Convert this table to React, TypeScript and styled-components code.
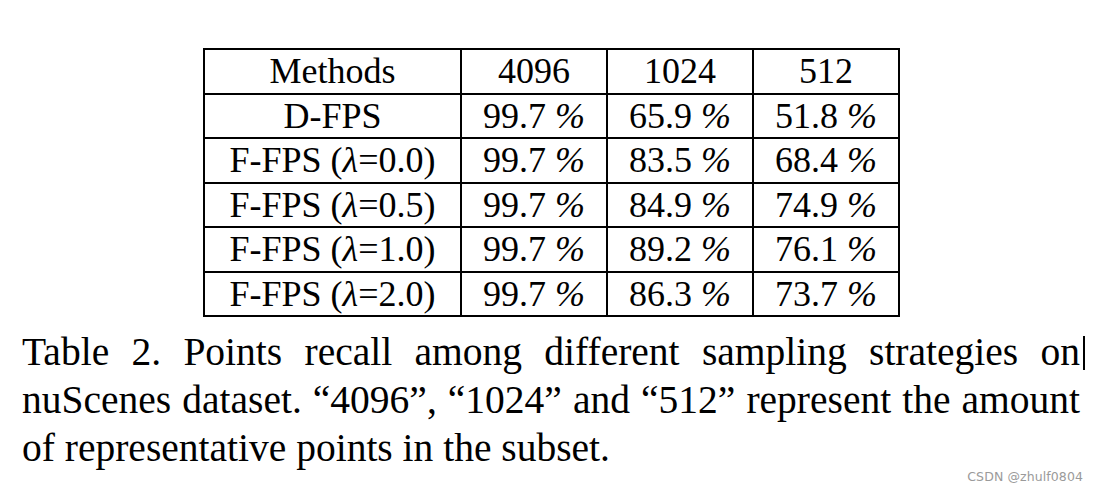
import React from 'react';
import styled, { createGlobalStyle } from 'styled-components';

// Data
interface ResultRow {
  method: string;
  lambda?: string;
  values: string[];
}

const columns = ['4096', '1024', '512'];

const rows: ResultRow[] = [
  { method: 'D-FPS', values: ['99.7', '65.9', '51.8'] },
  { method: 'F-FPS', lambda: '0.0', values: ['99.7', '83.5', '68.4'] },
  { method: 'F-FPS', lambda: '0.5', values: ['99.7', '84.9', '74.9'] },
  { method: 'F-FPS', lambda: '1.0', values: ['99.7', '89.2', '76.1'] },
  { method: 'F-FPS', lambda: '2.0', values: ['99.7', '86.3', '73.7'] },
];

// Styled components
const GlobalStyle = createGlobalStyle`
  html, body {
    margin: 0;
    padding: 0;
    background: #fff;
  }
  body {
    width: 1104px;
    height: 494px;
    overflow: hidden;
    font-family: "Liberation Serif", "Times New Roman", serif;
    color: #000;
  }
`;

const Page = styled.div`
  position: relative;
  width: 1104px;
  height: 494px;
  padding-top: 48px;
  box-sizing: border-box;
`;

const ResultsTable = styled.table`
  border-collapse: collapse;
  margin-left: 203px;
  font-size: 36px;
  line-height: 1;
`;

const Cell = styled.td<{ $wide?: boolean }>`
  border: 2px solid #000;
  width: ${props => (props.$wide ? '255px' : '144px')};
  height: 42.5px;
  padding: 0;
  text-align: center;
  vertical-align: middle;
  white-space: nowrap;
`;

const Pct = styled.span`
  font-style: italic;
`;

const Lambda = styled.span`
  font-style: italic;
`;

const Caption = styled.div`
  margin: 11px 0 0 22px;
  width: 1058px;
  font-size: 39.5px;
  line-height: 48px;
`;

const CaptionLine = styled.div<{ $last?: boolean }>`
  text-align: justify;
  text-align-last: ${props => (props.$last ? 'left' : 'justify')};
  white-space: nowrap;
`;

const Caret = styled.span`
  display: inline-block;
  width: 2px;
  height: 34px;
  margin-left: 3px;
  margin-right: -5px;
  background: #000;
  vertical-align: -5px;
`;

const Watermark = styled.div`
  position: absolute;
  right: 21px;
  bottom: 10px;
  font-family: "DejaVu Sans", "Liberation Sans", sans-serif;
  font-size: 12.5px;
  color: #9a9a9a;
  letter-spacing: 0.1px;
`;

const App: React.FC = () => {
  return (
    <>
      <GlobalStyle />
      <Page>
        <ResultsTable>
          <tbody>
            <tr>
              <Cell $wide>Methods</Cell>
              {columns.map(col => (
                <Cell key={col}>{col}</Cell>
              ))}
            </tr>
            {rows.map((row, i) => (
              <tr key={i}>
                <Cell $wide>
                  {row.method}
                  {row.lambda && (
                    <>
                      {' ('}
                      <Lambda>λ</Lambda>={row.lambda})
                    </>
                  )}
                </Cell>
                {row.values.map((v, j) => (
                  <Cell key={j}>
                    {v} <Pct>%</Pct>
                  </Cell>
                ))}
              </tr>
            ))}
          </tbody>
        </ResultsTable>

        <Caption>
          <CaptionLine>
            Table 2. Points recall among different sampling strategies on<Caret />
          </CaptionLine>
          <CaptionLine>
            nuScenes dataset. “4096”, “1024” and “512” represent the amount
          </CaptionLine>
          <CaptionLine $last>of representative points in the subset.</CaptionLine>
        </Caption>

        <Watermark>CSDN @zhulf0804</Watermark>
      </Page>
    </>
  );
};

export default App;
